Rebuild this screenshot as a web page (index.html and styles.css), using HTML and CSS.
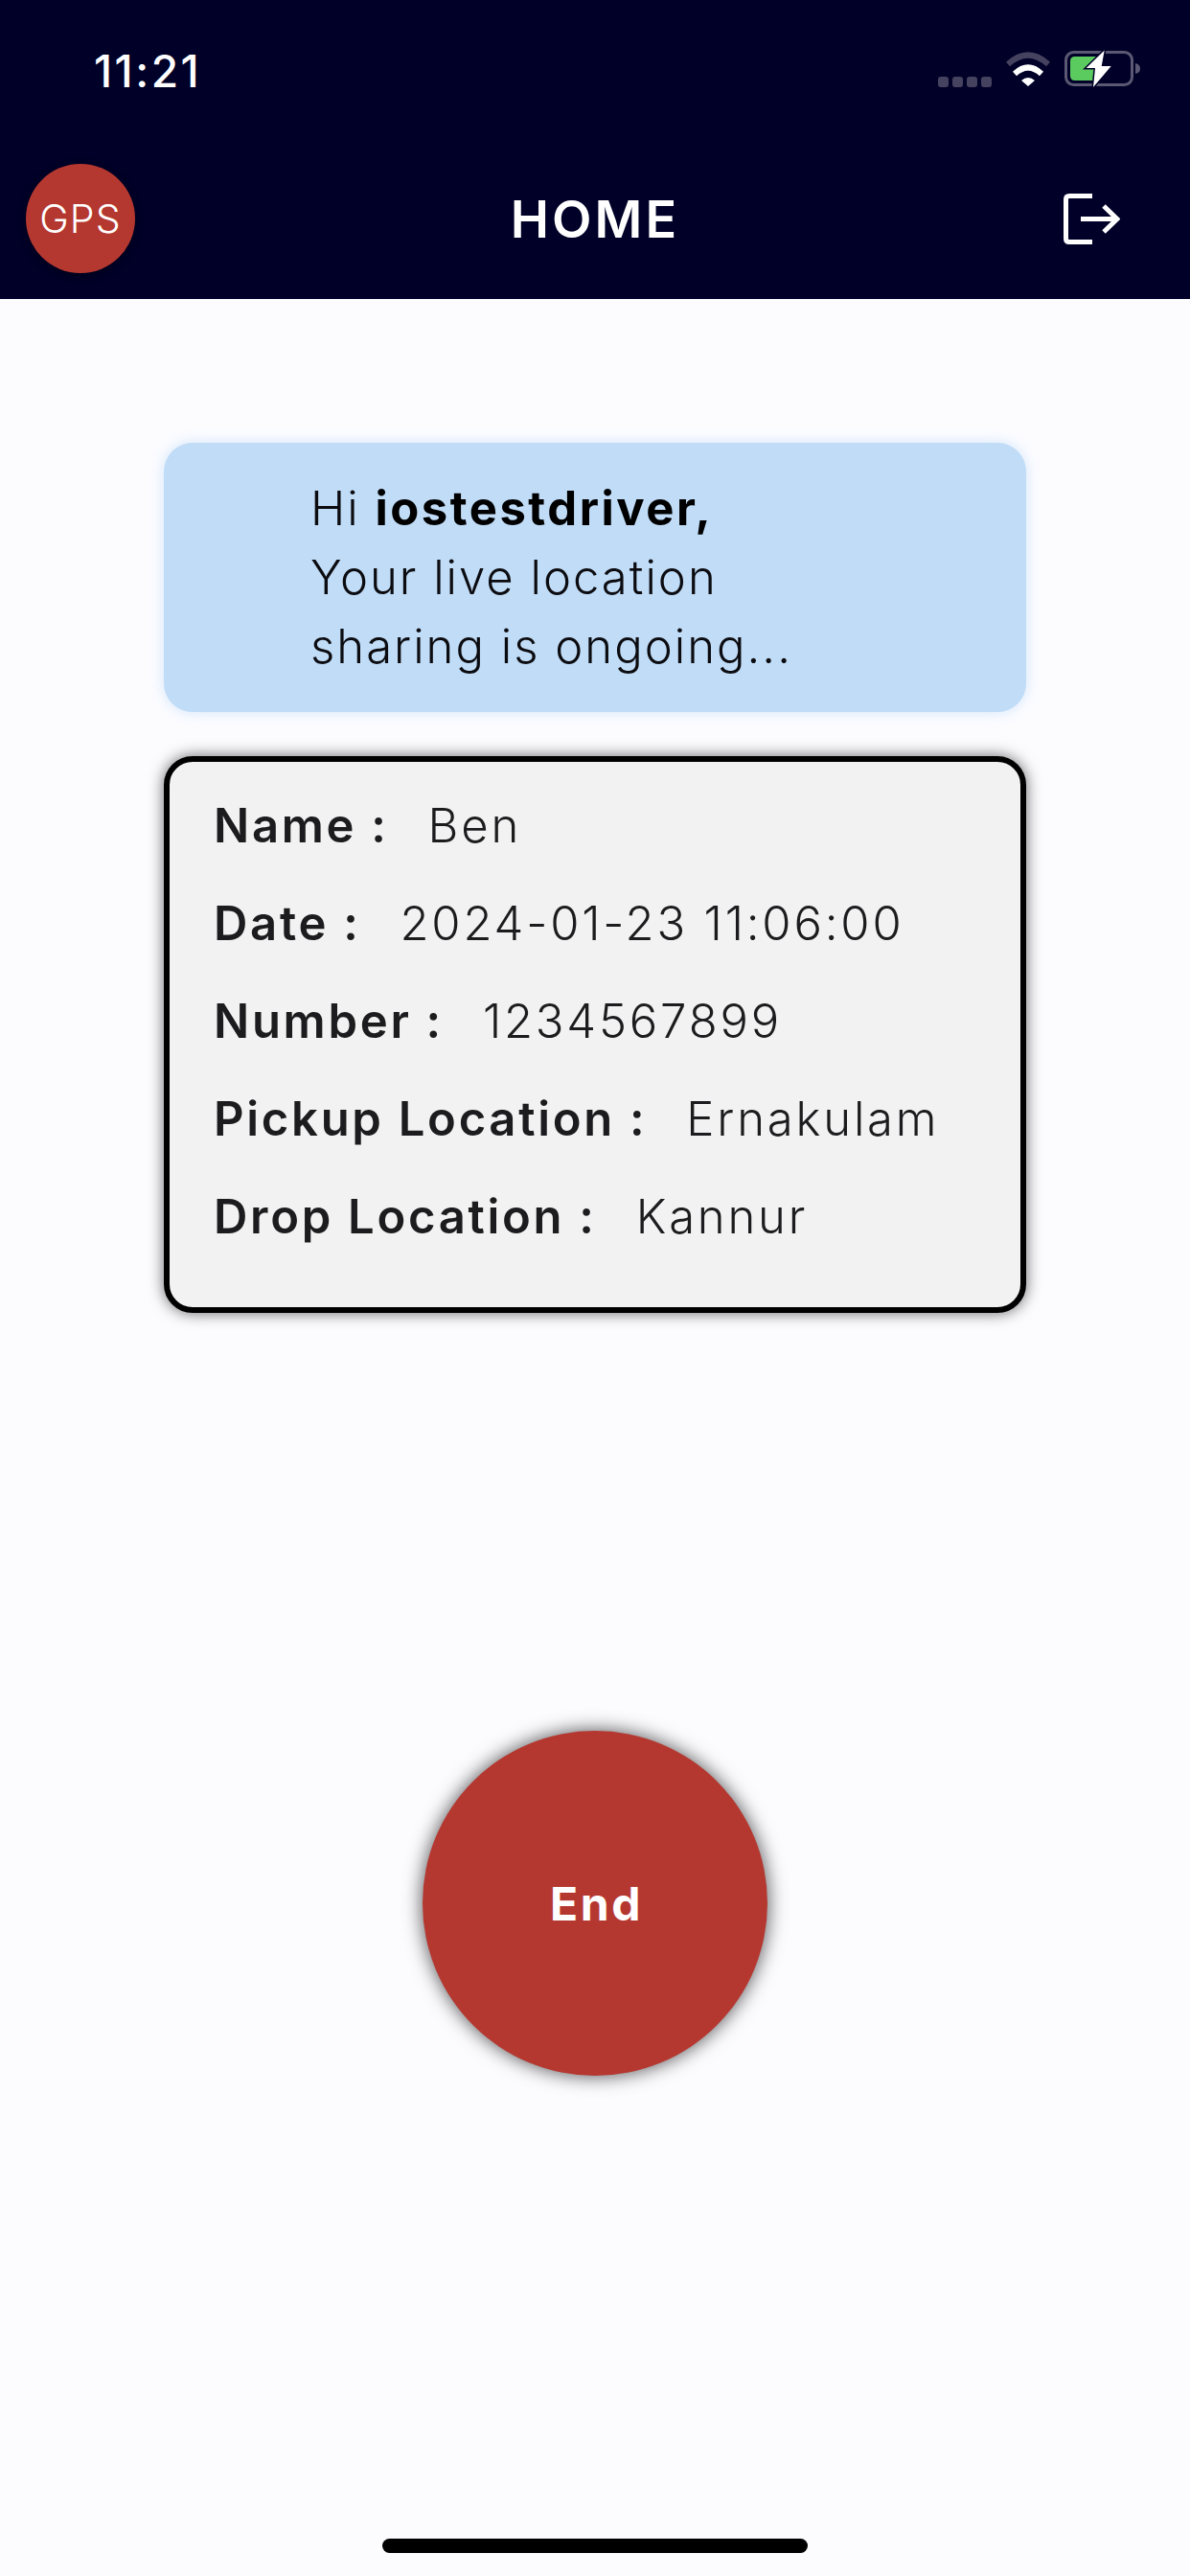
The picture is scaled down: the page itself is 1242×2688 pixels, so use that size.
FILE: index.html
```
<!DOCTYPE html>
<html lang="en">
<head>
  <meta charset="UTF-8">
  <title>Home</title>
  <link rel="stylesheet" href="styles.css">
</head>
<body>
  <header class="top">
    <div class="status-bar">
      <span class="time">11:21</span>
      <div class="status-icons">
        <div class="signal">
          <span class="dot"></span><span class="dot"></span><span class="dot"></span><span class="dot"></span>
        </div>
        <svg class="wifi" viewBox="0 0 48 36">
          <path d="M3 13 Q24 -6 45 13" fill="none" stroke="#45425f" stroke-width="6"/>
          <path d="M10 23 Q24 10 38 23" fill="none" stroke="#fff" stroke-width="6"/>
          <path d="M17 30 Q24 24 31 30 L24 36 Z" fill="#fff"/>
        </svg>
        <svg class="battery" viewBox="0 0 80 40">
          <rect x="1.5" y="2.5" width="69" height="34" rx="8" fill="none" stroke="#5a5872" stroke-width="3"/>
          <path d="M74 14 Q79 15 79 19.500 Q79 24 74 25 Z" fill="#5a5872"/>
          <path d="M11 7 H33 V32 H11 Q6 32 6 27 V12 Q6 7 11 7 Z" fill="#5ccb5f"/>
          <path d="M41.700 0.500 L22.700 19 H32 L30 39 L48.700 17 H38.700 Z" fill="#fff" stroke="#000028" stroke-width="3" paint-order="stroke"/>
        </svg>
      </div>
    </div>
    <div class="toolbar">
      <div class="gps-badge">GPS</div>
      <h1 class="title">HOME</h1>
      <svg class="logout" viewBox="0 0 59 53">
        <path d="M30 2.500 H6 Q2.500 2.500 2.500 6 V47 Q2.500 50.500 6 50.500 H30" fill="none" stroke="#fff" stroke-width="5"/>
        <path d="M18 26.500 H56 M42 13 L56 26.500 L42 40" fill="none" stroke="#fff" stroke-width="5"/>
      </svg>
    </div>
  </header>

  <main class="content">
    <div class="greeting">
      <div>Hi <strong>iostestdriver,</strong></div>
      <div>Your live location</div>
      <div>sharing is ongoing...</div>
    </div>

    <div class="details">
      <div class="row"><b>Name :</b><span>Ben</span></div>
      <div class="row"><b>Date :</b><span>2024-01-23 11:06:00</span></div>
      <div class="row"><b>Number :</b><span>1234567899</span></div>
      <div class="row"><b>Pickup Location :</b><span>Ernakulam</span></div>
      <div class="row"><b>Drop Location :</b><span>Kannur</span></div>
    </div>

    <button class="end-btn">End</button>
  </main>

  <div class="home-bar"></div>
</body>
</html>
```
FILE: styles.css
```
* {
  box-sizing: border-box;
}

body {
  margin: 0;
  width: 1242px;
  height: 2688px;
  overflow: hidden;
  display: flex;
  flex-direction: column;
  background: #fcfcff;
  font-family: Inter, "Noto Sans", sans-serif;
}

.top {
  height: 312px;
  background: #000028;
  color: white;
}

.status-bar {
  height: 144px;
  display: flex;
  justify-content: space-between;
  align-items: center;
  padding: 0 51px 0 98px;
}

.time {
  margin-top: 3px;
  font-size: 46px;
  font-weight: 500;
  letter-spacing: 2.500px;
}

.status-icons {
  display: flex;
  align-items: center;
  gap: 14px;
}

.signal {
  display: flex;
  gap: 4px;
  margin-top: 27px;
}

.dot {
  width: 11px;
  height: 11px;
  border-radius: 3px;
  background: #45425f;
}

.wifi {
  width: 48px;
  height: 36px;
}

.battery {
  width: 80px;
  height: 40px;
}

.toolbar {
  height: 168px;
  display: grid;
  grid-template-columns: 1fr auto 1fr;
  align-items: center;
  padding: 0 73px 0 27px;
}

.gps-badge {
  width: 114px;
  height: 114px;
  border-radius: 50%;
  background: #b53830;
  box-shadow: 0 2px 8px rgba(0, 0, 0, 0.4);
  display: flex;
  justify-content: center;
  align-items: center;
  font-size: 41px;
  font-weight: 300;
  letter-spacing: 1.200px;
}

.title {
  margin: 0 0 0 46px;
  font-size: 54px;
  font-weight: 600;
  letter-spacing: 3px;
}

.logout {
  width: 59px;
  height: 53px;
  justify-self: end;
}

.content {
  flex: 1;
  display: flex;
  flex-direction: column;
  align-items: center;
  padding-top: 150px;
}

.greeting {
  width: 900px;
  height: 281px;
  padding: 33px 0 0 153px;
  border-radius: 30px;
  background: #c0dcf7;
  box-shadow: 0 0 14px rgba(192, 220, 247, 0.7);
  color: #0c0c10;
  font-size: 49px;
  line-height: 72px;
  letter-spacing: 2px;
  font-weight: 350;
}

.greeting strong {
  font-weight: 700;
  color: #000;
  letter-spacing: 2.500px;
}

.details {
  width: 900px;
  height: 581px;
  margin-top: 46px;
  padding: 15px 0 0 46px;
  border: 6px solid #000;
  border-radius: 30px;
  background: #f2f2f2;
  box-shadow: 0 0 16px rgba(0, 0, 0, 0.6);
  color: #1c1c1e;
}

.row {
  height: 102px;
  display: flex;
  align-items: center;
  gap: 41px;
  font-size: 49px;
  letter-spacing: 2.800px;
  font-weight: 350;
}

.row b {
  font-weight: 600;
  letter-spacing: 2.700px;
}

.end-btn {
  width: 360px;
  height: 360px;
  margin-top: 436px;
  padding: 0 0 0 3px;
  border: none;
  border-radius: 50%;
  background: #b53830;
  box-shadow: 0 0 20px rgba(0, 0, 0, 0.7);
  color: white;
  font-family: inherit;
  font-size: 48px;
  font-weight: 700;
  letter-spacing: 2.500px;
}

.home-bar {
  width: 444px;
  height: 15px;
  margin: 0 auto 24px;
  border-radius: 8px;
  background: #000;
}
```
